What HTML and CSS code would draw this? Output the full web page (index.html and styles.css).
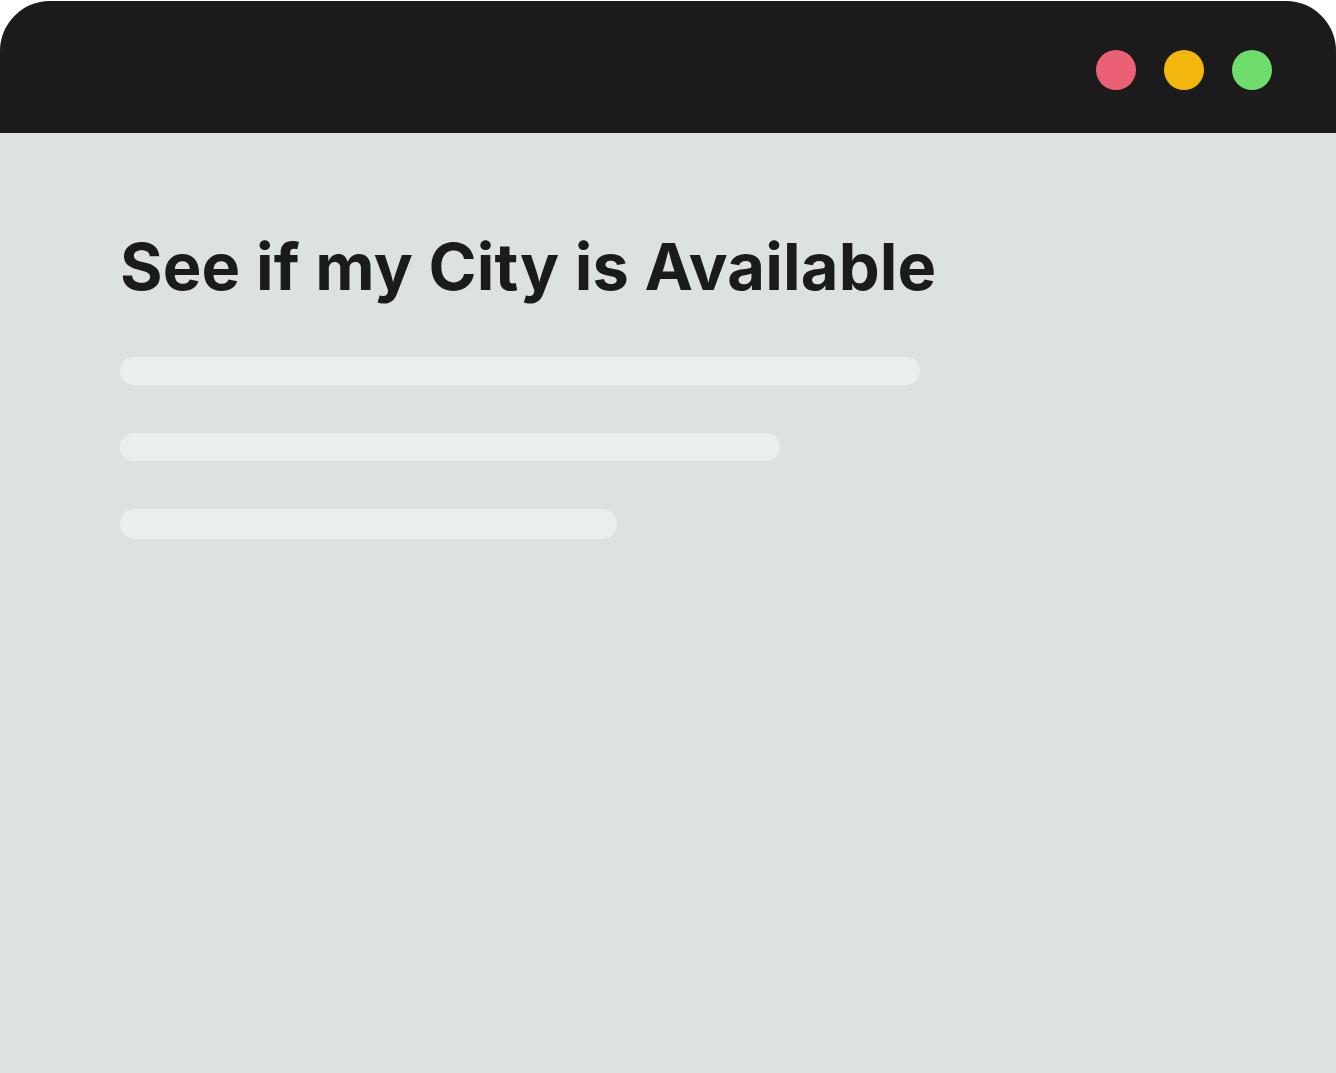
FILE: index.html
```html
<!DOCTYPE html>
<html lang="en">
<head>
<meta charset="utf-8">
<title>See if my City is Available</title>
<link rel="stylesheet" href="styles.css">
</head>
<body>
<div class="window">
  <header class="titlebar">
    <span class="dot dot-red"></span>
    <span class="dot dot-yellow"></span>
    <span class="dot dot-green"></span>
  </header>
  <main class="content">
    <h1 class="title">See if my City is Available</h1>
    <div class="lines">
      <div class="line line-1"></div>
      <div class="line line-2"></div>
      <div class="line line-3"></div>
    </div>
  </main>
</div>
</body>
</html>
```

FILE: styles.css
```css
html, body {
  margin: 0;
  padding: 0;
  background: #ffffff;
}
body {
  padding-top: 1px;
  height: 1072px;
  overflow: hidden;
}
.window {
  height: 100%;
  display: flex;
  flex-direction: column;
  background: #dce2e2;
  border-radius: 50px 50px 0 0;
  overflow: hidden;
}
.titlebar {
  height: 132px;
  background: #1b1b1b;
  display: flex;
  justify-content: flex-end;
  align-items: center;
  gap: 28px;
  padding: 5px 64px 0 0;
  box-sizing: border-box;
  flex-shrink: 0;
}
.dot {
  width: 40px;
  height: 40px;
  border-radius: 50%;
  display: block;
}
.dot-red { background: #ea6175; }
.dot-yellow { background: #f2b60d; }
.dot-green { background: #6fdd6b; }
.content {
  flex: 1;
  padding: 98px 0 0 120px;
}
.title {
  margin: 0;
  font-family: Inter, "Noto Sans", sans-serif;
  font-weight: 700;
  font-size: 65px;
  line-height: 72px;
  color: #1b1b1b;
  letter-spacing: 0.15px;
}
.lines {
  margin-top: 54px;
  display: flex;
  flex-direction: column;
  gap: 48px;
}
.line {
  height: 28px;
  border-radius: 14px;
  background: #eaeeef;
}
.line-1 { width: 800px; }
.line-2 { width: 660px; }
.line-3 { width: 497px; height: 30px; border-radius: 15px; }
```
